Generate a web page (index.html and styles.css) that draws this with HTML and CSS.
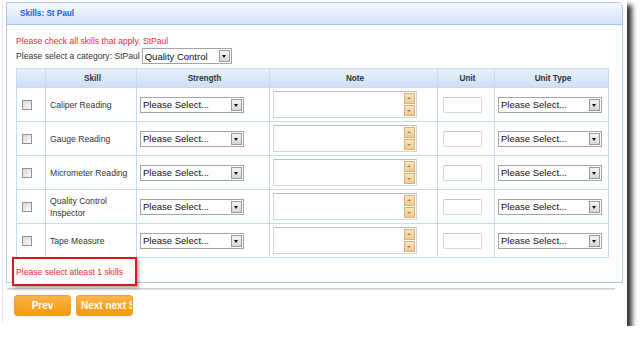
FILE: index.html
```html
<!DOCTYPE html>
<html lang="en">
<head>
  <meta charset="UTF-8" />
  <title>Skills: St Paul</title>
  <link rel="stylesheet" href="styles.css">
</head>
<body>
  <div class="shot">
    <div class="frame">
      <section class="panel">
        <div class="panel-head">Skills: St Paul</div>
        <div class="panel-body">
          <p class="note">Please check all skills that apply. StPaul</p>
          <div class="category">
            <span>Please select a category: StPaul</span>
            <div class="select select-cat"><span class="value">Quality Control</span><span class="drop"></span></div>
          </div>

          <table class="skills">
            <colgroup>
              <col class="c-check"><col class="c-skill"><col class="c-strength">
              <col class="c-note"><col class="c-unit"><col class="c-type">
            </colgroup>
            <thead>
              <tr><th></th><th>Skill</th><th>Strength</th><th>Note</th><th>Unit</th><th>Unit Type</th></tr>
            </thead>
            <tbody id="rows"></tbody>
          </table>

          <div class="error">Please select atleast 1 skills</div>
        </div>
      </section>

      <div class="divider"></div>

      <div class="actions">
        <button class="btn">Prev</button>
        <button class="btn btn-next">Next next Skill</button>
      </div>
    </div>
  </div>

  <script>
    const skills = ['Caliper Reading', 'Gauge Reading', 'Micrometer Reading', 'Quality Control Inspector', 'Tape Measure'];
    const rows = document.getElementById('rows');

    // one row per skill, all controls empty
    skills.forEach(name => {
      const tr = document.createElement('tr');
      tr.innerHTML = `
        <td class="check"><input type="checkbox"></td>
        <td class="name">${name}</td>
        <td><div class="select"><span class="value">Please Select...</span><span class="drop"></span></div></td>
        <td>
          <div class="memo">
            <textarea></textarea>
            <div class="scroll"><span class="up"></span><span class="down"></span></div>
          </div>
        </td>
        <td><input class="unit" type="text"></td>
        <td><div class="select"><span class="value">Please Select...</span><span class="drop"></span></div></td>`;
      rows.appendChild(tr);
    });
  </script>
</body>
</html>
```

FILE: styles.css
```css
body {
  margin: 0;
  background: #fff;
  font-family: 'Liberation Sans', Arial, sans-serif;
  font-size: 8.6px;
  color: #333;
}
.shot {
  width: 627px;
  height: 326px;
  box-sizing: border-box;
  padding: 2px 0 0 2px;
  background: #fff;
  box-shadow: 5px 5px 5px rgba(0, 0, 0, 0.8);
}
.frame {
  height: 320px;
  border-left: 1px solid #dde7f3;
  padding-left: 3px;
}
.panel {
  width: 617px;
  box-sizing: border-box;
  border: 1px solid #abc6ea;
  border-radius: 0 5px 0 0;
  background: #fff;
}
.panel-head {
  height: 21px;
  line-height: 21px;
  padding-left: 13px;
  border-bottom: 1px solid #abc6ea;
  border-radius: 0 4px 0 0;
  background: linear-gradient(#f4f8fd, #d6e4f7);
  color: #2160d4;
  font-weight: bold;
  font-size: 8.2px;
}
.panel-body {
  padding: 10px 14px 0 9px;
}
.note {
  margin: 0 0 1px;
  line-height: 12px;
  color: #f3283c;
}
.category {
  display: flex;
  align-items: center;
  gap: 2px;
  height: 16px;
  margin-bottom: 4px;
}
.select {
  display: flex;
  align-items: center;
  width: 104px;
  height: 16px;
  box-sizing: border-box;
  border: 1px solid #a0a6ae;
  background: #fff;
  color: #111;
  font-size: 9.5px;
}
.select-cat {
  width: 90px;
}
.select .value {
  flex: 1;
  padding-left: 2px;
  white-space: nowrap;
  overflow: hidden;
}
.select .drop {
  width: 11px;
  height: 12px;
  margin-right: 1px;
  box-sizing: border-box;
  border: 1px solid #9a9a9a;
  background: linear-gradient(#f4f4f4, #d8d8d8);
  position: relative;
}
.select .drop::after {
  content: '';
  position: absolute;
  left: 2px;
  top: 4px;
  border: 2.5px solid transparent;
  border-top: 3px solid #111;
}
.skills {
  width: 592px;
  table-layout: fixed;
  border-collapse: collapse;
}
.c-check { width: 29px; }
.c-skill { width: 91px; }
.c-strength { width: 133px; }
.c-note { width: 168px; }
.c-unit { width: 57px; }
.c-type { width: 114px; }
.skills th,
.skills td {
  border: 1px solid #c8daf2;
  padding: 0 0 0 3px;
}
.skills th {
  height: 18px;
  background: linear-gradient(#e9f1fb, #cddef4);
  font-weight: bold;
  font-size: 8.2px;
  color: #333;
}
.skills td {
  height: 33px;
  vertical-align: middle;
}
.skills td.check {
  padding-left: 5px;
}
.skills td.name {
  padding-left: 4px;
  line-height: 12px;
}
.check input {
  appearance: none;
  display: block;
  margin: 0;
  width: 10px;
  height: 10px;
  border: 1px solid #8f9296;
  background: linear-gradient(135deg, #d8d8d8, #fbfbfb);
}
.memo {
  display: flex;
  width: 144px;
  height: 27px;
  box-sizing: border-box;
  border: 1px solid #d4d4d4;
  border-top-color: #bdbdbd;
  background: #fff;
}
.memo textarea {
  flex: 1;
  border: none;
  resize: none;
  padding: 0;
  outline: none;
}
.scroll {
  display: flex;
  flex-direction: column;
  justify-content: space-between;
  width: 11px;
  padding: 1px 1px 1px 0;
}
.scroll span {
  position: relative;
  height: 11px;
  box-sizing: border-box;
  border: 1px solid #d7b27c;
  background: linear-gradient(#fae3bb, #f3c98a);
}
.scroll span::after {
  content: '';
  position: absolute;
  left: 2px;
  border: 2.5px solid transparent;
}
.scroll .up::after {
  top: 1px;
  border-bottom: 2.5px solid #8a8a8a;
}
.scroll .down::after {
  top: 4px;
  border-top: 2.5px solid #8a8a8a;
}
.unit {
  display: block;
  width: 39px;
  height: 16px;
  box-sizing: border-box;
  margin-left: 2px;
  border: 1px solid #d6d6d6;
  border-top-color: #c4c4c4;
  border-radius: 2px;
}
.error {
  position: relative;
  z-index: 1;
  width: 125px;
  height: 29px;
  box-sizing: border-box;
  margin: -1px 0 -4px -4px;
  padding: 7px 0 0 2px;
  line-height: 12px;
  border: 2px solid #e3141e;
  background: #fff;
  color: #f3283c;
  box-shadow: 2px 2px 3px rgba(0, 0, 0, 0.35);
}
.divider {
  width: 608px;
  height: 2px;
  margin: 5px 0 0 1px;
  background: linear-gradient(#c6c6c6, #e6e6e6);
}
.actions {
  display: flex;
  gap: 5px;
  margin: 5px 0 0 8px;
}
.btn {
  width: 57px;
  height: 21px;
  padding: 0;
  border: 1px solid #f0a030;
  border-radius: 3px;
  background: linear-gradient(#fbb445, #f39a10);
  color: #fff;
  font-family: inherit;
  font-weight: bold;
  font-size: 10px;
  white-space: nowrap;
  overflow: hidden;
}
.btn-next {
  text-align: left;
  padding-left: 4px;
}
```
